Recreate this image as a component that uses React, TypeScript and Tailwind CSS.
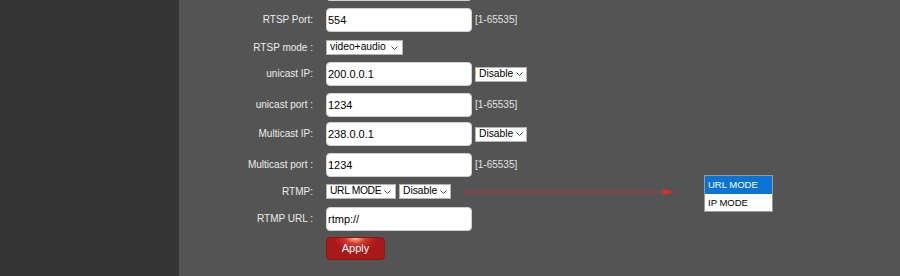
import React from "react";

const font = "font-['Liberation_Sans',Arial,sans-serif]";

function Chevron() {
  return (
    <svg width="7" height="4" viewBox="0 0 7 4" className="ml-auto shrink-0">
      <path d="M0.5 0.5 L3.5 3.5 L6.5 0.5" fill="none" stroke="#444" strokeWidth="1" />
    </svg>
  );
}

function Select({ text, className, tight }: { text: string; className: string; tight?: boolean }) {
  return (
    <div
      className={`flex h-[15px] items-center whitespace-nowrap border border-[#b4b4b4] bg-white pl-[3px] pr-[4px] text-[10.3px] leading-none text-black ${className}`}
    >
      <span className={tight ? "mr-[2px] tracking-[-0.35px]" : "mr-[3px]"}>{text}</span>
      <Chevron />
    </div>
  );
}

function Input({ value }: { value: string }) {
  return (
    <div className="flex h-[24px] w-[146px] items-center rounded-[4px] border border-[#d0d0d0] bg-white pl-[1px] text-[11px] leading-none text-black">
      {value}
    </div>
  );
}

function Label({ text }: { text: string }) {
  return (
    <div className="w-[134px] shrink-0 whitespace-nowrap text-right text-[10px] leading-none text-[#ececec]">{text}</div>
  );
}

function Range() {
  return <span className="ml-[3px] text-[10px] leading-none text-[#e2e2e2]">[1-65535]</span>;
}

export default function App() {
  return (
    <div className={`flex h-[276px] w-[900px] overflow-hidden ${font}`}>
      <div className="w-[179px] shrink-0 bg-[#343434]" />
      <div className="flex flex-1 flex-col bg-[#545454]">
        {/* partially visible input */}
        <div className="mt-[-23px] flex items-center">
          <Label text="" />
          <div className="ml-[13px]">
            <Input value="" />
          </div>
        </div>

        <div className="mt-[7px] flex items-center">
          <Label text="RTSP Port:" />
          <div className="ml-[13px] flex items-center">
            <Input value="554" />
            <Range />
          </div>
        </div>

        <div className="mt-[8px] flex items-center">
          <Label text="RTSP mode :" />
          <div className="ml-[13px]">
            <Select text="video+audio" className="w-[77px]" />
          </div>
        </div>

        <div className="mt-[7px] flex items-center">
          <Label text="unicast IP:" />
          <div className="ml-[13px] flex items-center">
            <Input value="200.0.0.1" />
            <Select text="Disable" className="ml-[3px] w-[52px]" />
          </div>
        </div>

        <div className="mt-[7px] flex items-center">
          <Label text="unicast port :" />
          <div className="ml-[13px] flex items-center">
            <Input value="1234" />
            <Range />
          </div>
        </div>

        <div className="mt-[5px] flex items-center">
          <Label text="Multicast IP:" />
          <div className="ml-[13px] flex items-center">
            <Input value="238.0.0.1" />
            <Select text="Disable" className="ml-[3px] w-[52px]" />
          </div>
        </div>

        <div className="mt-[7px] flex items-center">
          <Label text="Multicast port :" />
          <div className="ml-[13px] flex items-center">
            <Input value="1234" />
            <Range />
          </div>
        </div>

        <div className="mt-[7px] flex items-center">
          <Label text="RTMP:" />
          <div className="ml-[13px] flex items-center">
            <Select text="URL MODE" className="w-[70px]" tight />
            <Select text="Disable" className="ml-[3px] w-[52px]" />
            <svg width="212" height="8" viewBox="0 0 212 8" className="ml-[13px] mt-[1px] shrink-0">
              <line x1="0" y1="4" x2="201" y2="4" stroke="#c8302c" strokeWidth="1.2" />
              <polygon points="199,1 211,4 199,7" fill="#d3302a" />
            </svg>
            <div className="relative ml-[28px] h-[15px] w-[69px]">
              <div className="absolute left-0 top-[-9px] w-[69px] border border-[#9a9a9a] bg-white text-[9.5px] leading-none">
                <div className="flex h-[18px] items-center whitespace-nowrap bg-[#0a74d6] pl-[3px] text-white">URL MODE</div>
                <div className="flex h-[17px] items-center whitespace-nowrap pl-[3px] text-black">IP MODE</div>
              </div>
            </div>
          </div>
        </div>

        <div className="mt-[8px] flex items-center">
          <Label text="RTMP URL :" />
          <div className="ml-[13px]">
            <Input value="rtmp://" />
          </div>
        </div>

        <div className="mt-[6px] flex items-center">
          <Label text="" />
          <button className="ml-[13px] flex h-[23px] w-[59px] items-center justify-center rounded-[4px] border border-[#8e1512] bg-[radial-gradient(ellipse_40%_60%_at_50%_0%,#f3c6a8_0%,#d8372d_45%,#bb221d_75%,#a9191a_100%)] text-[11px] leading-none text-white">
            Apply
          </button>
        </div>
      </div>
    </div>
  );
}
